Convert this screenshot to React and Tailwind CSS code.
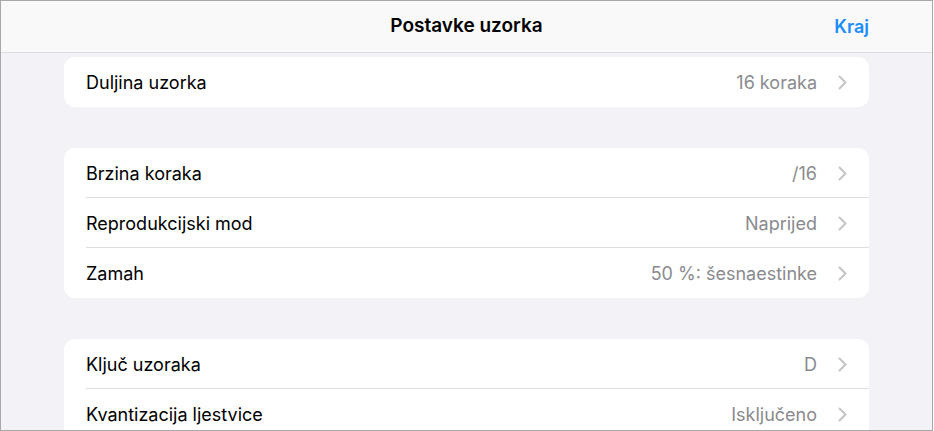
import React from 'react';

const Chevron = () => (
  <svg width="9" height="15" viewBox="0 0 9 15" fill="none" className="ml-[21px] mr-[22px] shrink-0">
    <path d="M1.5 1.5 L7.5 7.5 L1.5 13.5" stroke="#c4c4c7" strokeWidth="2" strokeLinecap="round" strokeLinejoin="round" />
  </svg>
);

const Row = ({ label, value, last }) => (
  <div className="flex h-[50px] items-stretch pl-[22px]">
    <div className={`flex flex-1 items-center pt-px ${last ? '' : 'border-b border-[#dedee0]'}`}>
      <span className="flex-1 text-[18px] text-black">{label}</span>
      <span className="text-[18px] text-[#8a8a8e]">{value}</span>
      <Chevron />
    </div>
  </div>
);

const Group = ({ rows }) => (
  <div className="mx-[63px] overflow-hidden rounded-[11px] bg-white">
    {rows.map((r, i) => (
      <Row key={r.label} label={r.label} value={r.value} last={i === rows.length - 1} />
    ))}
  </div>
);

const App = () => {
  return (
    <div
      className="h-[431px] w-[933px] overflow-hidden border border-[#a8a8a8] bg-[#f2f2f7]"
      style={{ fontFamily: 'Inter, "Noto Sans", sans-serif' }}
    >
      <div className="relative flex h-[52px] items-center justify-center border-b border-[#dcdcdf] bg-[#f9f9f9]">
        <span className="text-[19px] font-semibold text-black">Postavke uzorka</span>
        <span className="absolute right-[63px] text-[18px] font-semibold text-[#1a8cff]">Kraj</span>
      </div>
      <div className="flex flex-col gap-[41px] pt-[4px]">
        <Group rows={[{ label: 'Duljina uzorka', value: '16 koraka' }]} />
        <Group
          rows={[
            { label: 'Brzina koraka', value: '/16' },
            { label: 'Reprodukcijski mod', value: 'Naprijed' },
            { label: 'Zamah', value: '50 %: šesnaestinke' },
          ]}
        />
        <Group
          rows={[
            { label: 'Ključ uzoraka', value: 'D' },
            { label: 'Kvantizacija ljestvice', value: 'Isključeno' },
          ]}
        />
      </div>
    </div>
  );
};

export default App;
